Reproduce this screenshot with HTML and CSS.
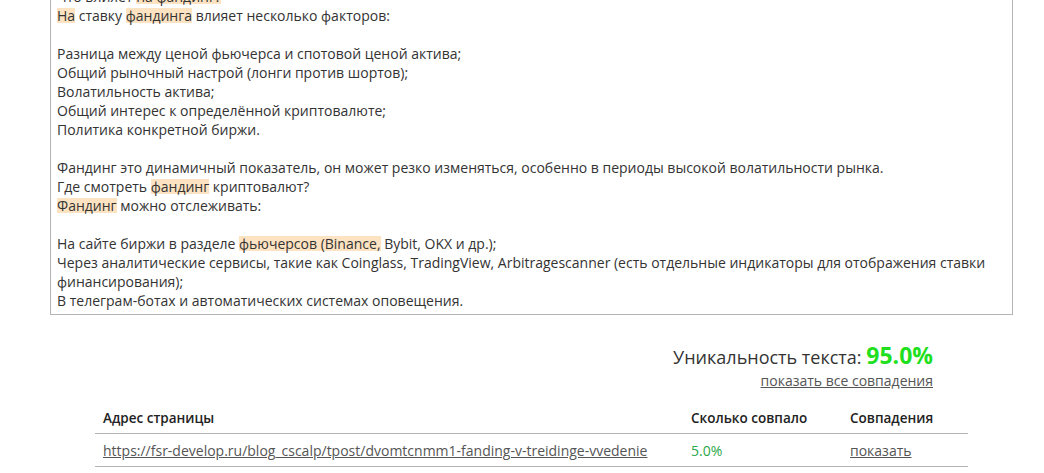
FILE: index.html
```html
<!DOCTYPE html>
<html lang="ru">
<head>
<meta charset="utf-8">
<title>Проверка уникальности</title>
<link rel="stylesheet" href="styles.css">
</head>
<body>
<div class="page">
  <div class="textbox">
    <div>Что влияет <span class="hl">на фандинг?</span></div>
    <div><span class="hl">На</span> ставку <span class="hl">фандинга</span> влияет несколько факторов:</div>
    <div class="blank"></div>
    <div>Разница между ценой фьючерса и спотовой ценой актива;</div>
    <div>Общий рыночный настрой (лонги против шортов);</div>
    <div>Волатильность актива;</div>
    <div>Общий интерес к определённой криптовалюте;</div>
    <div>Политика конкретной биржи.</div>
    <div class="blank"></div>
    <div>Фандинг это динамичный показатель, он может резко изменяться, особенно в периоды высокой волатильности рынка.</div>
    <div>Где смотреть <span class="hl">фандинг</span> криптовалют?</div>
    <div><span class="hl">Фандинг</span> можно отслеживать:</div>
    <div class="blank"></div>
    <div>На сайте биржи в разделе <span class="hl">фьючерсов (Binance,</span> Bybit, OKX и др.);</div>
    <div>Через аналитические сервисы, такие как Coinglass, TradingView, Arbitragescanner (есть отдельные индикаторы для отображения ставки финансирования);</div>
    <div>В телеграм-ботах и автоматических системах оповещения.</div>
  </div>

  <div class="results">
    <div class="summary">
      <div class="uniq">Уникальность текста: <span class="pct">95.0%</span></div>
      <a class="all-link" href="#">показать все совпадения</a>
    </div>
    <div class="table">
      <div class="cell head">Адрес страницы</div>
      <div class="cell head">Сколько совпало</div>
      <div class="cell head">Совпадения</div>
      <div class="cell"><a class="link" href="#">https://fsr-develop.ru/blog_cscalp/tpost/dvomtcnmm1-fanding-v-treidinge-vvedenie</a></div>
      <div class="cell match">5.0%</div>
      <div class="cell"><a class="link" href="#">показать</a></div>
    </div>
  </div>
</div>
</body>
</html>
```

FILE: styles.css
```css
html, body {
  margin: 0;
  padding: 0;
  background: #ffffff;
}

body {
  font-family: "Open Sans", "Liberation Sans", sans-serif;
  font-size: 14px;
  line-height: 19px;
  color: #333333;
  overflow: hidden;
}

.page {
  width: 1044px;
}

.textbox {
  box-sizing: border-box;
  margin: -20px 0 0 50px;
  width: 963px;
  border: 1px solid #b4b4b4;
  padding: 6px 6px 4px 6px;
}

.blank {
  height: 19px;
}

.hl {
  background: linear-gradient(to bottom, transparent 2px, #fde3c2 2px, #fde3c2 17px, transparent 17px);
}

.results {
  margin: 26px 0 0 95px;
  width: 873px;
}

.summary {
  padding-right: 35px;
  text-align: right;
}

.uniq {
  font-size: 18px;
  line-height: 28px;
  color: #333333;
}

.pct {
  font-size: 23px;
  font-weight: 700;
  color: #1fdf1f;
}

.all-link {
  display: inline-block;
  color: #555555;
  text-decoration: underline;
  line-height: 19px;
}

.table {
  display: grid;
  grid-template-columns: 588px 159px 126px;
  margin-top: 13px;
}

.cell {
  padding: 7px 8px 6px 8px;
  border-bottom: 1px solid #b4b4b4;
  white-space: nowrap;
}

.cell.head {
  font-size: 13.5px;
  font-weight: 600;
  color: #222222;
  padding-top: 6px;
  padding-bottom: 5px;
}

.link {
  color: #555555;
  text-decoration: underline;
}

.match {
  color: #2aa84a;
}
```
